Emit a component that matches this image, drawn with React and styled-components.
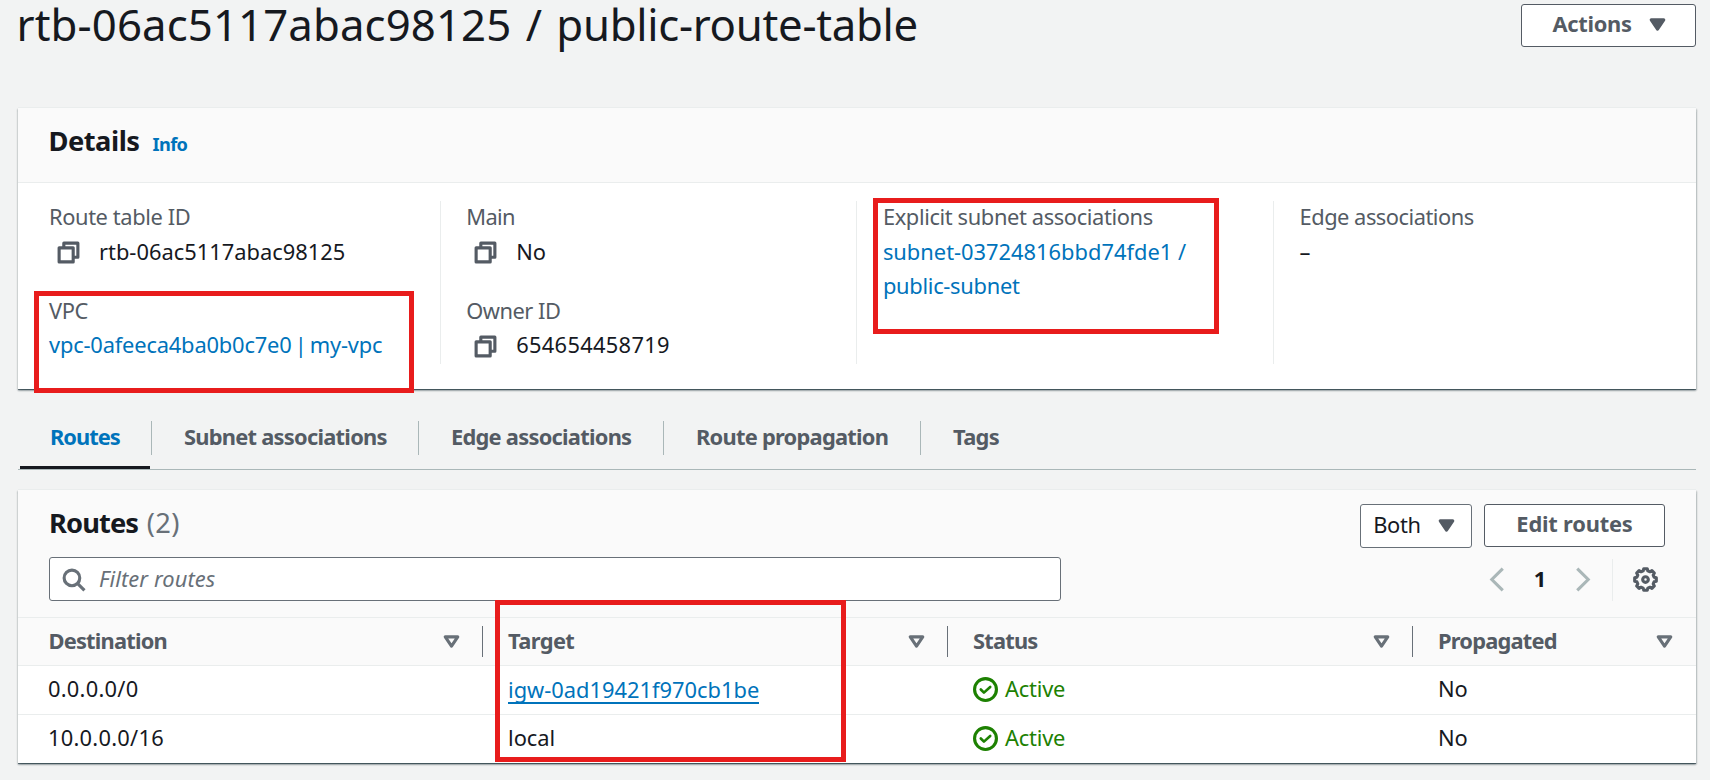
import React from "react";
import styled, { createGlobalStyle } from "styled-components";

const GlobalStyle = createGlobalStyle`
  *, *::before, *::after { box-sizing: border-box; }
  html, body { margin: 0; background: #f2f3f3; }
  body {
    font-family: "Noto Sans", "Open Sans", sans-serif;
    font-size: 21.875px;
    line-height: 34.375px;
    color: #16191f;
    overflow: hidden;
  }
`;

const Page = styled.main`
  position: relative;
  height: 780px;
  padding: 0 14px 0 18px;
  overflow: hidden;
`;

const T = styled.span`
  white-space: nowrap;
  letter-spacing: ${(p) => p.$ls || 0}px;
`;

const PageHeader = styled.header`
  display: flex;
  justify-content: space-between;
  align-items: flex-start;
  height: 108px;
`;

const Title = styled.h1`
  margin: 0 0 0 -1.5px;
  font-size: 43.75px;
  font-weight: 400;
  line-height: 48px;
  white-space: nowrap;
  word-spacing: 3px;
`;

const Button = styled.button`
  display: flex;
  align-items: center;
  justify-content: center;
  gap: ${(p) => p.$gap || 0}px;
  width: ${(p) => p.$w}px;
  height: ${(p) => p.$h || 43}px;
  margin: ${(p) => p.$m || "0"};
  padding: 0 0 ${(p) => p.$pb ?? 3}px ${(p) => p.$pl || 0}px;
  font: inherit;
  font-weight: ${(p) => (p.$plain ? 400 : 700)};
  color: ${(p) => (p.$plain ? "#16191f" : "#545b64")};
  background: #fff;
  border: 1px solid ${(p) => (p.$plain ? "#687078" : "#545b64")};
  border-radius: 3px;
`;

const Card = styled.section`
  background: #fff;
  border-top: 1px solid #eaeded;
  box-shadow: 0 2px 1.5px rgba(0, 28, 36, 0.3), 1.5px 1.5px 1.5px rgba(0, 28, 36, 0.15),
    -1.5px 1.5px 1.5px rgba(0, 28, 36, 0.15), 0 1px 0 #879196;
`;

const DetailsCard = styled(Card)`
  height: 282px;
  margin-top: -1px;
`;

const CardHeader = styled.div`
  display: flex;
  align-items: baseline;
  gap: 13px;
  height: 75px;
  padding: 16px 31px 0 30.5px;
  background: #fafafa;
  border-bottom: 1px solid #eaeded;
`;

const Heading = styled.h2`
  margin: ${(p) => p.$mt || 0}px 0 0;
  font-size: 27.3px;
  font-weight: 700;
  white-space: nowrap;
  letter-spacing: ${(p) => p.$ls || 0}px;
`;

const Count = styled.span`
  margin-left: 8.5px;
  font-weight: 400;
  color: #687078;
  letter-spacing: 0.4px;
`;

const InfoLink = styled.a`
  font-size: 18.2px;
  font-weight: 700;
  color: #0073bb;
  letter-spacing: -0.6px;
`;

const DetailsGrid = styled.div`
  display: grid;
  grid-template-columns: repeat(4, 416.7px);
  margin: 18px 0 0 5px;
  height: 163px;
`;

const DetailsColumn = styled.div`
  display: flex;
  flex-direction: column;
  gap: 25px;
  padding-left: ${(p) => (p.$first ? 25 : 25.5)}px;
  border-left: 1px solid ${(p) => (p.$first ? "transparent" : "#eaeded")};
`;

const Field = styled.dl`
  margin: -0.8px 0 0.8px;
`;

const FieldLabel = styled.dt`
  color: #545b64;
  white-space: nowrap;
  letter-spacing: ${(p) => p.$ls || 0}px;
`;

const FieldValue = styled.dd`
  display: flex;
  align-items: center;
  margin: 0;
`;

const Link = styled.a`
  color: #0073bb;
  white-space: nowrap;
  letter-spacing: ${(p) => p.$ls || 0}px;
  word-spacing: ${(p) => p.$ws || 0}px;
`;

const CopySlot = styled.span`
  display: flex;
  width: 50px;
  padding: 1px 0 0 6.5px;
`;

const Tabs = styled.nav`
  display: flex;
  height: 81px;
  padding-top: 32px;
  border-bottom: 1px solid #aab7b8;
`;

const Tab = styled.a`
  position: relative;
  flex: none;
  width: ${(p) => p.$w}px;
  height: 34px;
  padding-left: 32px;
  line-height: 32.5px;
  font-weight: 700;
  white-space: nowrap;
  letter-spacing: ${(p) => p.$ls || 0}px;
  color: ${(p) => (p.$active ? "#0073bb" : "#545b64")};
  border-right: ${(p) => (p.$last ? "none" : "1px solid #aab7b8")};
  &::after {
    content: "";
    display: ${(p) => (p.$active ? "block" : "none")};
    position: absolute;
    left: 2px;
    right: 1px;
    bottom: -14px;
    height: 3px;
    background: #16191f;
  }
`;

const RoutesCard = styled(Card)`
  margin-top: 19px;
  height: 274px;
`;

const RoutesHeader = styled.div`
  height: 128px;
  padding: 14px 31px 0 31px;
  background: #fafafa;
  border-bottom: 1px solid #eaeded;
`;

const HeaderRow = styled.div`
  display: flex;
  justify-content: space-between;
  align-items: flex-start;
  height: ${(p) => p.$h}px;
`;

const Group = styled.div`
  display: flex;
  align-items: flex-start;
`;

const Pagination = styled.div`
  display: flex;
  align-items: center;
  margin-top: 1.5px;
`;

const SearchBox = styled.div`
  display: flex;
  align-items: center;
  gap: 13px;
  width: 1012px;
  height: 44px;
  padding-left: 11px;
  background: #fff;
  border: 1px solid #687078;
  border-radius: 3px;
`;

const Placeholder = styled.span`
  font-style: italic;
  color: #687078;
  letter-spacing: 0.1px;
`;

const PageNumber = styled.span`
  width: 62px;
  text-align: center;
  font-weight: 700;
`;

const Settings = styled.div`
  display: flex;
  align-items: center;
  height: 42px;
  margin-left: 16px;
  padding: 0 7px 0 20px;
  border-left: 1px solid #eaeded;
`;

const Table = styled.div`
  display: grid;
  grid-template-columns: 465px 465px 465px 283px;
`;

const HeadCell = styled.div`
  display: flex;
  align-items: center;
  height: 48px;
  background: #fafafa;
  border-bottom: 1px solid #eaeded;
`;

const HeadInner = styled.div`
  display: flex;
  align-items: center;
  justify-content: space-between;
  flex: 1;
  height: 31px;
  padding: 0 ${(p) => (p.$last ? 19 : 18)}px 0 ${(p) => (p.$first ? 30.5 : 25)}px;
  font-weight: 700;
  color: #545b64;
  border-right: ${(p) => (p.$last ? "none" : "1px solid #687078")};
`;

const Cell = styled.div`
  display: flex;
  align-items: center;
  height: 49px;
  padding: 0 0 2px ${(p) => (p.$first ? 30 : 25)}px;
  border-bottom: ${(p) => (p.$last ? "none" : "1px solid #eaeded")};
`;

const TargetLink = styled.a`
  height: 30px;
  line-height: 31px;
  margin-bottom: 1px;
  color: #0073bb;
  border-bottom: 2px solid #0073bb;
`;

const Status = styled.span`
  display: flex;
  align-items: center;
  gap: 7px;
  color: #1d8102;
  letter-spacing: -0.2px;
`;

const Highlight = styled.div`
  position: absolute;
  left: ${(p) => p.$x}px;
  top: ${(p) => p.$y}px;
  width: ${(p) => p.$w}px;
  height: ${(p) => p.$h}px;
  border: 5px solid #e81c1c;
  pointer-events: none;
`;

const Svg = styled.svg`
  display: block;
  flex: none;
  width: 25px;
  height: 25px;
  fill: none;
  stroke: ${(p) => p.$color || "#545b64"};
  stroke-width: 2;
  overflow: visible;
`;

const CopyIcon = () => (
  <CopySlot>
    <Svg viewBox="0 0 16 16">
      <path d="M2 5h9v9H2z" strokeLinejoin="round" />
      <path d="M5 5V2h9v9h-3" strokeLinejoin="round" />
    </Svg>
  </CopySlot>
);

const Caret = () => (
  <Svg viewBox="0 0 16 16">
    <path d="M4 5h8l-4 6z" fill="#545b64" strokeLinejoin="round" />
  </Svg>
);

const SortIcon = () => (
  <Svg viewBox="0 0 16 16" $color="#687078">
    <path d="M4 5h8l-4 6z" strokeLinejoin="round" />
  </Svg>
);

const SearchIcon = () => (
  <Svg viewBox="0 0 16 16" $color="#687078">
    <circle cx="7" cy="7" r="5" />
    <path d="M15 15l-4.5-4.5" />
  </Svg>
);

const Chevron = ({ d }) => (
  <Svg viewBox="0 0 16 16" $color="#aab7b8">
    <path d={d} />
  </Svg>
);

const CheckIcon = () => (
  <Svg viewBox="0 0 16 16" $color="#1d8102">
    <circle cx="8" cy="8" r="7" />
    <path d="M5 8l2 2 4-3.6" strokeLinecap="round" strokeLinejoin="round" strokeWidth="1.7" />
  </Svg>
);

const gearOutline = () => {
  const points = [];
  for (let i = 0; i < 8; i++) {
    [[-15, 5.7], [-9, 7], [9, 7], [15, 5.7]].forEach(([offset, r]) => {
      const a = ((i * 45 + offset) * Math.PI) / 180;
      points.push(`${(8 + r * Math.sin(a)).toFixed(2)} ${(8 - r * Math.cos(a)).toFixed(2)}`);
    });
  }
  return `M${points.join("L")}Z`;
};

const GearIcon = () => (
  <Svg viewBox="0 0 16 16">
    <path d={gearOutline()} strokeLinejoin="round" />
    <circle cx="8" cy="8" r="1.8" />
  </Svg>
);

const columns = [
  { name: "Destination", ls: -0.8 },
  { name: "Target", ls: -0.6 },
  { name: "Status", ls: -0.8 },
  { name: "Propagated", ls: -0.8 },
];

const routes = [
  { destination: "0.0.0.0/0", target: "igw-0ad19421f970cb1be", linked: true, status: "Active", propagated: "No" },
  { destination: "10.0.0.0/16", target: "local", status: "Active", propagated: "No" },
];

const tabs = [
  { name: "Routes", w: 134, ls: -1, active: true },
  { name: "Subnet associations", w: 267, ls: -0.75 },
  { name: "Edge associations", w: 245, ls: -0.75 },
  { name: "Route propagation", w: 257, ls: -0.75 },
  { name: "Tags", w: 120, ls: -0.7, last: true },
];

export default function App() {
  return (
    <>
      <GlobalStyle />
      <Page>
        <PageHeader>
          <Title>
            <T $ls={0.1}>rtb-06ac5117abac98125</T> / <T $ls={-0.3}>public-route-table</T>
          </Title>
          <Button $w={175} $gap={13} $pl={5} $m="4px 0 0">
            <T $ls={-0.3}>Actions</T>
            <Caret />
          </Button>
        </PageHeader>

        <DetailsCard>
          <CardHeader>
            <Heading $ls={-0.5}>Details</Heading>
            <InfoLink>Info</InfoLink>
          </CardHeader>
          <DetailsGrid>
            <DetailsColumn $first>
              <Field>
                <FieldLabel $ls={-0.4}>Route table ID</FieldLabel>
                <FieldValue>
                  <CopyIcon />
                  <T>rtb-06ac5117abac98125</T>
                </FieldValue>
              </Field>
              <Field>
                <FieldLabel $ls={-0.4}>VPC</FieldLabel>
                <FieldValue>
                  <Link $ls={-0.18} $ws={-2.3}>
                    vpc-0afeeca4ba0b0c7e0 | my-vpc
                  </Link>
                </FieldValue>
              </Field>
            </DetailsColumn>
            <DetailsColumn>
              <Field>
                <FieldLabel $ls={-0.6}>Main</FieldLabel>
                <FieldValue>
                  <CopyIcon />
                  <T>No</T>
                </FieldValue>
              </Field>
              <Field>
                <FieldLabel $ls={-0.5}>Owner ID</FieldLabel>
                <FieldValue>
                  <CopyIcon />
                  <T $ls={0.3}>654654458719</T>
                </FieldValue>
              </Field>
            </DetailsColumn>
            <DetailsColumn>
              <Field>
                <FieldLabel $ls={-0.38}>Explicit subnet associations</FieldLabel>
                <FieldValue>
                  <Link>
                    <T $ls={0}>subnet-03724816bbd74fde1 /</T>
                    <br />
                    <T $ls={-0.28}>public-subnet</T>
                  </Link>
                </FieldValue>
              </Field>
            </DetailsColumn>
            <DetailsColumn>
              <Field>
                <FieldLabel $ls={-0.5}>Edge associations</FieldLabel>
                <FieldValue>–</FieldValue>
              </Field>
            </DetailsColumn>
          </DetailsGrid>
        </DetailsCard>

        <Tabs>
          {tabs.map((t) => (
            <Tab key={t.name} $w={t.w} $ls={t.ls} $active={t.active} $last={t.last}>
              {t.name}
            </Tab>
          ))}
        </Tabs>

        <RoutesCard>
          <RoutesHeader>
            <HeaderRow $h={53}>
              <Heading $ls={-0.9} $mt={2}>
                Routes<Count>(2)</Count>
              </Heading>
              <Group>
                <Button $plain $w={112} $h={44} $pb={1} $gap={13}>
                  <T $ls={-0.3}>Both</T>
                  <Caret />
                </Button>
                <Button $w={181} $m="0 0 0 12px">
                  <T $ls={-0.2}>Edit routes</T>
                </Button>
              </Group>
            </HeaderRow>
            <HeaderRow $h={44}>
              <SearchBox>
                <SearchIcon />
                <Placeholder>Filter routes</Placeholder>
              </SearchBox>
              <Pagination>
                <Chevron d="M12 1L5 8l7 7" />
                <PageNumber>1</PageNumber>
                <Chevron d="M4 1l7 7-7 7" />
                <Settings>
                  <GearIcon />
                </Settings>
              </Pagination>
            </HeaderRow>
          </RoutesHeader>
          <Table>
            {columns.map((c, i) => (
              <HeadCell key={c.name}>
                <HeadInner $first={i === 0} $last={i === 3}>
                  <T $ls={c.ls}>{c.name}</T>
                  <SortIcon />
                </HeadInner>
              </HeadCell>
            ))}
            {routes.map((r, i) => (
              <React.Fragment key={r.destination}>
                <Cell $first $last={i === 1}>
                  <T $ls={0.25}>{r.destination}</T>
                </Cell>
                <Cell $last={i === 1}>
                  {r.linked ? <TargetLink>{r.target}</TargetLink> : <T $ls={0}>{r.target}</T>}
                </Cell>
                <Cell $last={i === 1}>
                  <Status>
                    <CheckIcon />
                    {r.status}
                  </Status>
                </Cell>
                <Cell $last={i === 1}>{r.propagated}</Cell>
              </React.Fragment>
            ))}
          </Table>
        </RoutesCard>

        <Highlight $x={34} $y={290.5} $w={380} $h={102.5} />
        <Highlight $x={872.5} $y={197.5} $w={346} $h={136.5} />
        <Highlight $x={494.5} $y={600} $w={351} $h={162} />
      </Page>
    </>
  );
}
